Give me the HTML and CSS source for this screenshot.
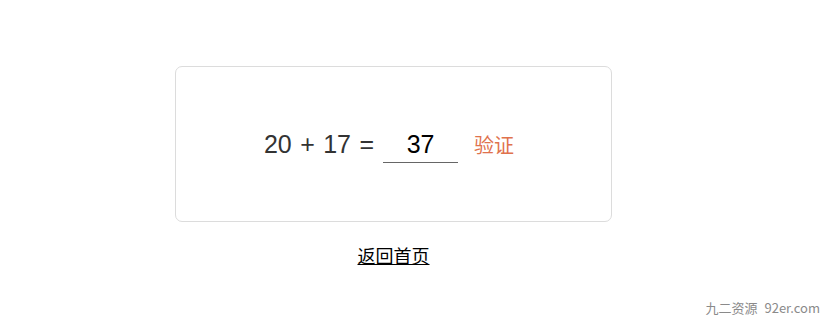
FILE: index.html
```html
<!DOCTYPE html>
<html lang="zh-CN">
<head>
    <meta charset="UTF-8">
    <meta name="viewport" content="width=device-width, initial-scale=1.0">
    <title>验证</title>
    <link rel="stylesheet" href="styles.css">
</head>
<body>
    <div class="page">
        <div class="card">
            <form class="verify-row" onsubmit="return false">
                <span class="question">20 + 17 =</span>
                <input class="answer" type="text" value="37">
                <button class="verify-btn" type="submit">验证</button>
            </form>
        </div>
        <a class="home-link" href="#">返回首页</a>
    </div>
    <div class="watermark">九二资源 92er.com</div>
</body>
</html>
```

FILE: styles.css
```css
* {
    margin: 0;
    padding: 0;
    box-sizing: border-box;
}

body {
    background: #ffffff;
    font-family: "Liberation Sans", Arial, "Noto Sans CJK SC", sans-serif;
    color: #333;
    height: 327px;
    overflow: hidden;
}

.page {
    width: 437px;
    margin: 66px 0 0 175px;
    display: flex;
    flex-direction: column;
    align-items: center;
}

.card {
    width: 100%;
    height: 156px;
    border: 1px solid #dcdcdc;
    border-radius: 7px;
    display: flex;
    align-items: center;
    justify-content: center;
}

.verify-row {
    display: flex;
    align-items: center;
    margin-right: 9px;
}

.question {
    font-size: 25px;
    word-spacing: 1.5px;
    color: #333;
}

.answer {
    width: 75px;
    height: 34px;
    margin-left: 9px;
    margin-top: 3px;
    border: none;
    border-bottom: 1px solid #666;
    outline: none;
    font-family: inherit;
    font-size: 25px;
    color: #000;
    text-align: center;
    padding-bottom: 2px;
    background: transparent;
}

.verify-btn {
    margin-left: 16px;
    border: none;
    background: none;
    font-family: "Noto Sans CJK SC", sans-serif;
    font-size: 20px;
    color: #e0724d;
    cursor: pointer;
}

.home-link {
    margin-top: 18px;
    font-family: "Noto Sans CJK SC", sans-serif;
    font-size: 18px;
    line-height: 30px;
    color: #000;
}

.watermark {
    position: absolute;
    right: 8px;
    bottom: 10px;
    font-family: "Noto Sans CJK SC", sans-serif;
    font-size: 13px;
    word-spacing: 4px;
    color: #8a8a8a;
}
```
